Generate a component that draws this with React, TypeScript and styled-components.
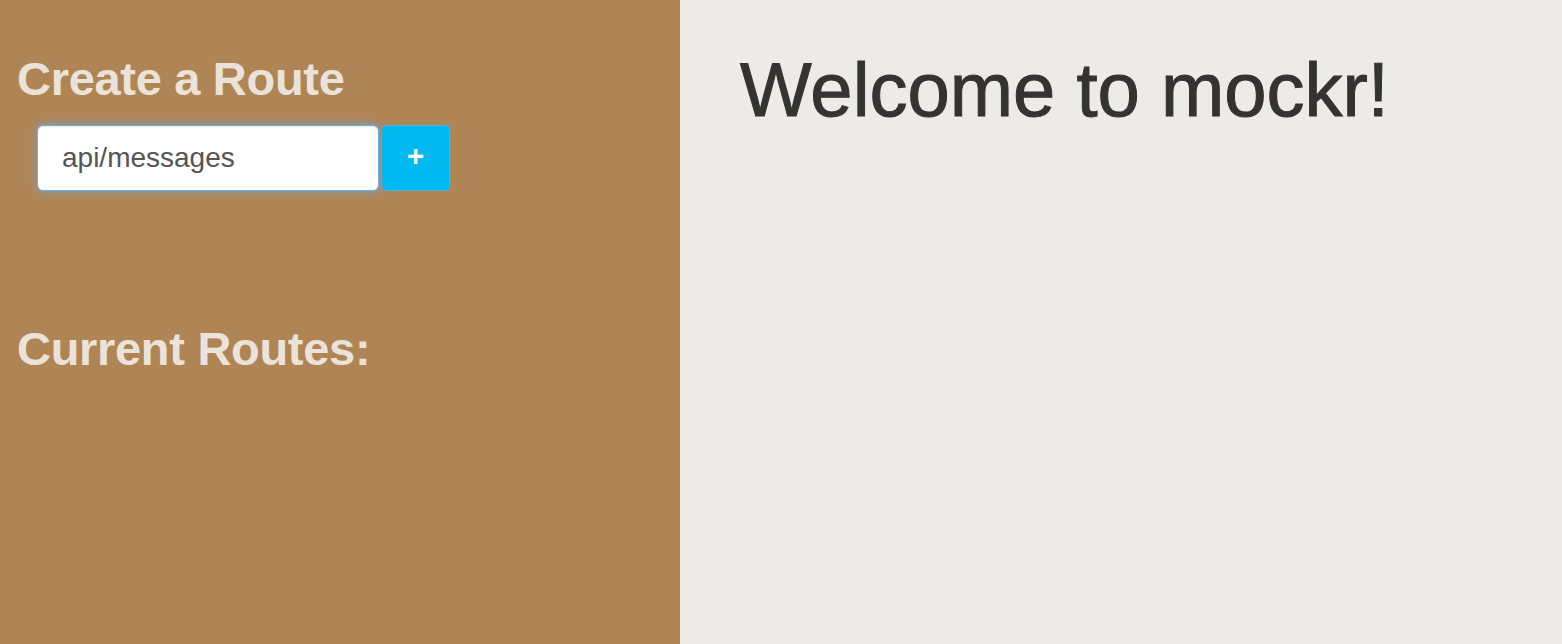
import React from "react";
import styled, { createGlobalStyle } from "styled-components";

const Global = createGlobalStyle`
  html, body { margin: 0; padding: 0; }
  body { font-family: "Liberation Sans", Arial, sans-serif; }
  * { box-sizing: border-box; }
`;

const Page = styled.div`
  display: flex;
  width: 100%;
  height: 644px;
  overflow: hidden;
`;

const Sidebar = styled.aside`
  width: 680px;
  flex: 0 0 680px;
  background: #b08556;
  padding: 52px 17px 0 17px;
  display: flex;
  flex-direction: column;
`;

const SideHeading = styled.h2<{ $gap?: number }>`
  margin: 0;
  margin-top: ${(p) => p.$gap ?? 0}px;
  font-size: 47px;
  line-height: 54px;
  font-weight: 700;
  color: #ebe3da;
  letter-spacing: -0.3px;
`;

const Form = styled.form`
  display: flex;
  align-items: stretch;
  gap: 2px;
  margin: 19px 0 0 20px;
  height: 66px;
`;

const RouteInput = styled.input`
  width: 342px;
  height: 66px;
  border: 1px solid #66afe9;
  border-radius: 6px;
  background: #fff;
  padding: 0 0 0 24px;
  font-family: "Liberation Sans", Arial, sans-serif;
  font-size: 28px;
  color: #555;
  outline: none;
  box-shadow: inset 0 1px 1px rgba(0, 0, 0, 0.075), 0 0 10px rgba(102, 175, 233, 0.75);
`;

const AddButton = styled.button`
  width: 69px;
  height: 66px;
  border: 1px solid #46b3e3;
  border-radius: 5px;
  background: #00b9f1;
  color: #fff;
  font-family: "Liberation Sans", Arial, sans-serif;
  font-size: 30px;
  font-weight: 700;
  line-height: 1;
  padding: 0 0 4px 0;
  cursor: pointer;
`;

const Main = styled.main`
  flex: 1;
  background: #ecebe7;
  padding: 47px 0 0 60px;
`;

const Title = styled.h1`
  margin: 0;
  font-size: 76px;
  line-height: 86px;
  font-weight: 400;
  color: #333;
  -webkit-text-stroke: 1px #333;
`;

export default function App() {
  return (
    <>
      <Global />
      <Page>
        <Sidebar>
          <SideHeading>Create a Route</SideHeading>
          <Form onSubmit={(e) => e.preventDefault()}>
            <RouteInput defaultValue="api/messages" />
            <AddButton type="submit">+</AddButton>
          </Form>
          <SideHeading $gap={131}>Current Routes:</SideHeading>
        </Sidebar>
        <Main>
          <Title>Welcome to mockr!</Title>
        </Main>
      </Page>
    </>
  );
}
